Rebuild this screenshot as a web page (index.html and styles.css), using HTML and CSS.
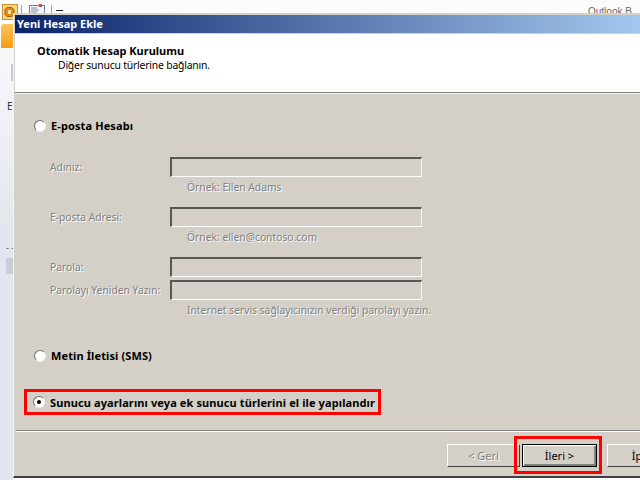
FILE: index.html
```html
<!DOCTYPE html>
<html lang="en">
<head>
    <meta charset="UTF-8">
    <meta name="viewport" content="width=device-width, initial-scale=1.0">
    <title>Yeni Hesap Ekle</title>
    <link rel="stylesheet" href="styles.css">
</head>
<body>
    <div class="app">
        <div class="app-top">
            <svg class="app-logo" width="16" height="16" viewBox="0 0 16 16">
                <rect x="0.5" y="0.5" width="15" height="15" fill="#f9d67e" stroke="#c9912f"/>
                <path d="M5 3.5h5l2 2v5l-2 2H5l-2-2v-5z" fill="#e08a10" stroke="#a85f08"/>
                <rect x="6" y="6" width="3" height="4" fill="#fbe3a8"/>
            </svg>
            <span class="app-sep"></span>
            <svg class="app-icon" width="16" height="10" viewBox="0 0 16 10">
                <rect x="0.5" y="1.5" width="15" height="8" fill="#f4f6fa" stroke="#6e7f9c"/>
                <path d="M2 4h6M2 6h8M2 8h6" stroke="#7d8aa5"/>
                <rect x="10" y="0" width="3" height="3" fill="#d9433a"/>
            </svg>
            <span class="app-sep"></span>
            <span class="app-dash"></span>
            <span class="app-name">Outlook B</span>
        </div>
        <div class="app-side">
            <div class="app-tab"></div>
            <div class="app-mark"></div>
            <div class="app-letter">E</div>
            <div class="app-dots">- -</div>
            <div class="app-block"></div>
        </div>
    </div>

    <div class="dialog">
        <div class="titlebar">Yeni Hesap Ekle</div>
        <div class="header">
            <div class="header-title">Otomatik Hesap Kurulumu</div>
            <div class="header-sub">Diğer sunucu türlerine bağlanın.</div>
        </div>

        <div class="content">
            <label class="choice choice-first"><span class="radio"></span>E-posta Hesabı</label>

            <div class="field field-first">
                <span class="field-label">Adınız:</span>
                <span class="textbox"></span>
            </div>
            <div class="hint">Örnek: Ellen Adams</div>

            <div class="field field-second">
                <span class="field-label">E-posta Adresi:</span>
                <span class="textbox"></span>
            </div>
            <div class="hint">Örnek: ellen@contoso.com</div>

            <div class="field field-second">
                <span class="field-label">Parola:</span>
                <span class="textbox"></span>
            </div>
            <div class="field field-tight">
                <span class="field-label">Parolayı Yeniden Yazın:</span>
                <span class="textbox"></span>
            </div>
            <div class="hint">Internet servis sağlayıcınızın verdiği parolayı yazın.</div>

            <label class="choice choice-sms"><span class="radio"></span>Metin İletisi (SMS)</label>

            <label class="choice choice-manual"><span class="radio radio-on"></span>Sunucu ayarlarını veya ek sunucu türlerini el ile yapılandır</label>
        </div>

        <div class="footer">
            <button class="btn btn-back" disabled>&lt; Geri</button>
            <button class="btn btn-next">İleri &gt;</button>
            <button class="btn btn-cancel">İptal</button>
        </div>
    </div>
</body>
</html>
```

FILE: styles.css
```css
html, body {
    margin: 0;
    height: 100%;
    overflow: hidden;
}

body {
    position: relative;
    width: 640px;
    height: 480px;
    background-color: #fcfcfc;
    font-family: "Noto Sans", sans-serif;
    font-size: 11px;
    color: #000;
}

/* outlook window behind the dialog */
.app-top {
    display: flex;
    align-items: flex-start;
    height: 13px;
    padding: 4px 0 0 2px;
    box-sizing: border-box;
}

.app-logo {
    flex-shrink: 0;
}

.app-icon {
    margin-left: 7px;
    flex-shrink: 0;
}

.app-sep {
    width: 1px;
    height: 9px;
    margin: 1px 0 0 3px;
    background-color: #9aa0a8;
}

.app-dash {
    width: 7px;
    height: 1px;
    margin: 6px 0 0 4px;
    background-color: #222;
}

.app-icon + .app-sep {
    margin-left: 6px;
}

.app-name {
    position: absolute;
    left: 588px;
    top: 6px;
    color: #6a6a6a;
    font-size: 10px;
    font-family: "Liberation Sans", sans-serif;
}

.app-side {
    position: absolute;
    left: 0;
    top: 24px;
    width: 13px;
    height: 456px;
    background: linear-gradient(#fbfbfc, #e2e6ee 45%);
}

.app-tab {
    height: 24px;
    margin-left: 1px;
    background: linear-gradient(#ffc45a, #f59d14);
    border-radius: 3px 0 0 0;
}

.app-mark {
    width: 2px;
    height: 17px;
    margin: 16px 0 0 11px;
    background-color: #c5cbd6;
}

.app-letter {
    margin: 18px 0 0 7px;
    font-size: 10px;
    line-height: 14px;
    color: #333;
}

.app-dots {
    margin: 130px 0 0 6px;
    font-size: 9px;
    line-height: 10px;
    white-space: nowrap;
    color: #555;
}

.app-block {
    width: 7px;
    height: 16px;
    margin: 5px 0 0 6px;
    background-color: #c8cdd8;
}

/* dialog */
.dialog {
    position: absolute;
    left: 13px;
    top: 13px;
    width: 700px;
    height: 465px;
    padding: 2px 0 0 2px;
    box-sizing: border-box;
    background-color: #d4d0c8;
    border-left: 1px solid #f4f4f2;
    border-bottom: 2px solid #404040;
}

.titlebar {
    height: 18px;
    margin-left: -1px;
    padding-left: 2px;
    line-height: 18px;
    font-weight: bold;
    white-space: nowrap;
    color: #fff;
    background: linear-gradient(to right, #0a246a, #a6caf0 91%);
}

.header {
    height: 60px;
    margin-left: -1px;
    padding: 10px 0 0 22px;
    box-sizing: border-box;
    background-color: #fff;
    border-top: 1px solid #d4d0c8;
    border-bottom: 1px solid #808080;
    box-shadow: 0 1px 0 #f4f4f2;
}

.header-title {
    font-weight: bold;
    line-height: 13px;
}

.header-sub {
    margin: 2px 0 0 21px;
    font-size: 10.4px;
    letter-spacing: -0.2px;
    line-height: 13px;
}

.content {
    height: 336px;
    padding: 1px 0 0 18px;
    border-bottom: 1px solid #808080;
    box-shadow: 0 1px 0 #fff;
}

.choice {
    display: flex;
    align-items: center;
    font-weight: bold;
    letter-spacing: 0.11px;
    line-height: 13px;
    white-space: nowrap;
}

.choice-first {
    margin-top: 25px;
}

.choice-sms {
    margin-top: 32px;
}

.choice-manual {
    width: 357px;
    height: 26px;
    margin: 27px 0 0 -10px;
    padding-left: 6px;
    box-sizing: border-box;
    border: 3px solid #f00;
}

.radio {
    position: relative;
    width: 12px;
    height: 12px;
    margin-right: 5px;
    flex-shrink: 0;
    box-sizing: border-box;
    background-color: #fff;
    border: 1px solid;
    border-color: #6e6e6e #f0f0f0 #f0f0f0 #6e6e6e;
    border-radius: 50%;
}

.radio-on::after {
    content: "";
    position: absolute;
    left: 3px;
    top: 3px;
    width: 4px;
    height: 4px;
    background-color: #000;
    border-radius: 50%;
}

.field {
    display: flex;
    align-items: center;
    color: #808080;
    font-size: 10.3px;
    text-shadow: 1px 1px 0 #fff;
}

.field-first {
    margin-top: 25px;
}

.field-second {
    margin-top: 13px;
}

.field-tight {
    margin-top: 3px;
}

.field-label {
    width: 120px;
    margin-left: 16px;
    padding-bottom: 1px;
    white-space: nowrap;
}

.textbox {
    width: 252px;
    height: 20px;
    box-sizing: border-box;
    border: 2px solid;
    border-color: #585858 #f4f4f2 #fff #585858;
    border-right-width: 1px;
    border-bottom-width: 1px;
}

.hint {
    margin: 4px 0 1px 153px;
    height: 13px;
    font-size: 10.3px;
    line-height: 13px;
    white-space: nowrap;
    color: #808080;
    text-shadow: 1px 1px 0 #fff;
}

.footer {
    display: flex;
    padding: 13px 0 0 431px;
}

.btn {
    position: relative;
    flex-shrink: 0;
    width: 73px;
    height: 23px;
    padding: 0;
    box-sizing: border-box;
    font-family: inherit;
    font-size: 11px;
    color: #000;
    background-color: #d4d0c8;
    border: 1px solid;
    border-color: #fff #404040 #404040 #fff;
}

.btn-back {
    color: #808080;
    text-shadow: 1px 1px 0 #fff;
}

.btn-next {
    width: 75px;
    margin-left: 2px;
    border: 1px solid #000;
    box-shadow: inset 1px 1px 0 #fff, inset -2px -2px 0 #808080;
}

/* red marker drawn over the buttons */
.btn-next::after {
    content: "";
    position: absolute;
    left: -9px;
    top: -9px;
    width: 88px;
    height: 38px;
    box-sizing: border-box;
    border: 3px solid #f00;
}

.btn-cancel {
    margin-left: 10px;
}
```
